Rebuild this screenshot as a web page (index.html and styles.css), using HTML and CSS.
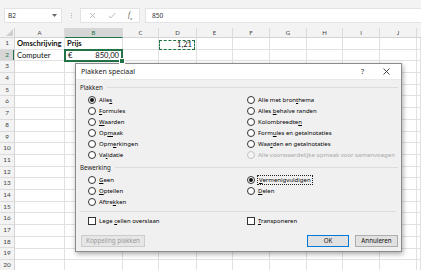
FILE: index.html
```html
<!DOCTYPE html>
<html>
<head>
<meta charset="utf-8">
<link rel="stylesheet" href="styles.css">
</head>
<body>
<div class="app">
  <div class="fbar">
    <div class="namebox"><span class="nb-text">B2</span><svg class="nb-caret" width="5" height="3" viewBox="0 0 5 3"><path d="M0 0h5L2.5 3z" fill="#666"/></svg></div>
    <div class="grip"><i></i><i></i><i></i></div>
    <div class="fxtools">
      <svg width="7" height="7" viewBox="0 0 7 7"><path d="M1 1l5 5M6 1l-5 5" stroke="#b4b4b4" stroke-width="0.9"/></svg>
      <svg width="8" height="7" viewBox="0 0 8 7"><path d="M0.8 3.8l2 2.2 4.4-5" stroke="#b4b4b4" stroke-width="0.9" fill="none"/></svg>
      <span class="fx">f<sub>x</sub></span>
    </div>
    <div class="finput">850</div>
  </div>
  <div class="sheet">
    <div class="heads">
      <div class="corner"><svg width="7" height="7" viewBox="0 0 7 7"><path d="M7 0v7H0z" fill="#cfcfcf"/></svg></div>
      <div class="ch w-a">A</div>
      <div class="ch w-b on">B</div>
      <div class="ch w-c">C</div>
      <div class="ch w-d">D</div>
      <div class="ch w-e">E</div>
      <div class="ch w-f">F</div>
      <div class="ch w-g">G</div>
      <div class="ch w-h">H</div>
      <div class="ch w-i">I</div>
      <div class="ch w-j">J</div>
      <div class="ch w-k"></div>
    </div>
    <div class="body">
      <div class="rowheads">
        <div class="rh">1</div><div class="rh on">2</div><div class="rh">3</div><div class="rh">4</div><div class="rh">5</div>
        <div class="rh">6</div><div class="rh">7</div><div class="rh">8</div><div class="rh">9</div><div class="rh">10</div>
        <div class="rh">11</div><div class="rh">12</div><div class="rh">13</div><div class="rh">14</div><div class="rh">15</div>
        <div class="rh">16</div><div class="rh">17</div><div class="rh">18</div><div class="rh">19</div><div class="rh">20</div>
      </div>
      <div class="col w-a"><div class="cell bold">Omschrijving</div><div class="cell">Computer</div></div>
      <div class="col w-b"><div class="cell bold">Prijs</div><div class="cell sel"><span>€</span><span>850,00</span></div></div>
      <div class="col w-c"></div>
      <div class="col w-d"><div class="cell copy">1,21</div></div>
      <div class="col w-e"></div>
      <div class="col w-f"></div>
      <div class="col w-g"></div>
      <div class="col w-h"></div>
      <div class="col w-i"></div>
      <div class="col w-j"></div>
      <div class="col w-k"></div>
    </div>
  </div>

  <div class="dialog">
    <div class="titlebar">
      <span class="title">Plakken speciaal</span>
      <span class="help">?</span>
      <svg class="close" width="7" height="7" viewBox="0 0 7 7"><path d="M0.5 0.5l6 6M6.5 0.5l-6 6" stroke="#333" stroke-width="0.9"/></svg>
    </div>
    <div class="content">
      <div class="group"><span>Plakken</span><i></i></div>
      <div class="opts">
        <div class="opt"><span class="radio on"></span><span>Alle<u>s</u></span></div>
        <div class="opt"><span class="radio"></span><span>Alle met bron<u>t</u>hema</span></div>
        <div class="opt"><span class="radio"></span><span><u>F</u>ormules</span></div>
        <div class="opt"><span class="radio"></span><span>Alles <u>b</u>ehalve randen</span></div>
        <div class="opt"><span class="radio"></span><span><u>W</u>aarden</span></div>
        <div class="opt"><span class="radio"></span><span>Kolombreedte<u>n</u></span></div>
        <div class="opt"><span class="radio"></span><span>Op<u>m</u>aak</span></div>
        <div class="opt"><span class="radio"></span><span>Form<u>u</u>les en getalnotaties</span></div>
        <div class="opt"><span class="radio"></span><span>Opm<u>e</u>rkingen</span></div>
        <div class="opt"><span class="radio"></span><span>Waa<u>r</u>den en getalnotaties</span></div>
        <div class="opt"><span class="radio"></span><span>Va<u>l</u>idatie</span></div>
        <div class="opt dis"><span class="radio"></span><span>Alle voorwaardelijke opmaak voor samenvoegen</span></div>
      </div>
      <div class="group"><span>Bewerking</span><i></i></div>
      <div class="opts">
        <div class="opt"><span class="radio"></span><span><u>G</u>een</span></div>
        <div class="opt"><span class="radio on"></span><span class="focus"><u>V</u>ermenigvuldigen</span></div>
        <div class="opt"><span class="radio"></span><span><u>O</u>ptellen</span></div>
        <div class="opt"><span class="radio"></span><span><u>D</u>elen</span></div>
        <div class="opt"><span class="radio"></span><span>Aftre<u>k</u>ken</span></div>
        <div class="opt"></div>
      </div>
      <div class="rule"></div>
      <div class="opts checks">
        <div class="opt"><span class="check"></span><span>Lege <u>c</u>ellen overslaan</span></div>
        <div class="opt"><span class="check"></span><span><u>T</u>ransponeren</span></div>
      </div>
      <div class="buttons">
        <div class="btn disabled w-link">Koppeling plakken</div>
        <div class="spacer"></div>
        <div class="btn default w-ok">OK</div>
        <div class="btn w-cancel">Annuleren</div>
      </div>
    </div>
  </div>
</div>
</body>
</html>
```

FILE: styles.css
```css
* { box-sizing: border-box; }
html, body { margin: 0; padding: 0; }
body {
  width: 421px;
  height: 270px;
  overflow: hidden;
  background: #fff;
  font-family: "Noto Sans", "Open Sans", sans-serif;
}
.app { position: relative; width: 421px; height: 270px; overflow: hidden; }

/* formula bar */
.fbar {
  height: 28px;
  background: #f3f3f3;
  display: flex;
  align-items: flex-start;
  padding-top: 8px;
  padding-left: 4px;
}
.namebox {
  width: 58px;
  height: 15px;
  background: #fff;
  border: 1px solid #e3e3e3;
  display: flex;
  align-items: center;
  justify-content: space-between;
  padding: 0 4px 0 3px;
  font-size: 6.6px;
  color: #333;
}
.grip {
  width: 18px;
  height: 15px;
  display: flex;
  flex-direction: column;
  align-items: center;
  justify-content: center;
  gap: 1px;
}
.grip i { display: block; width: 1px; height: 1px; background: #b8b8b8; }
.fxtools {
  width: 60px;
  height: 15px;
  background: #fff;
  border: 1px solid #e3e3e3;
  display: flex;
  align-items: center;
  gap: 12px;
  padding-left: 8px;
}
.fx {
  font-family: "Liberation Serif", serif;
  font-style: italic;
  font-size: 7.5px;
  color: #555;
}
.fx sub { font-size: 5px; }
.finput {
  flex: 1;
  height: 15px;
  margin-left: 5px;
  background: #fff;
  border: 1px solid #e3e3e3;
  border-right: none;
  font-size: 6.6px;
  color: #333;
  padding-left: 6px;
  line-height: 13px;
}

/* sheet */
.sheet { font-family: "Lato", "Liberation Sans", sans-serif; }
.heads { display: flex; height: 10px; background: #f3f3f3; }
.corner {
  width: 15px;
  border-right: 1px solid #d4d4d4;
  border-bottom: 1px solid #d4d4d4;
  display: flex;
  align-items: flex-end;
  justify-content: flex-end;
  padding: 0 1px 1px 0;
}
.ch {
  border-right: 1px solid #dadada;
  border-bottom: 1px solid #d4d4d4;
  font-size: 6px;
  color: #444;
  text-align: center;
  line-height: 9px;
}
.ch.on { background: #d6d6d6; border-bottom: 1px solid #217346; color: #217346; }
.w-a { width: 50px; }
.w-b { width: 58px; }
.w-c { width: 36px; }
.w-d { width: 38px; }
.w-e { width: 36px; }
.w-f { width: 37px; }
.w-g { width: 37px; }
.w-h { width: 36px; }
.w-i { width: 37px; }
.w-j { width: 37px; }
.w-k { flex: 1; border-right: none; }

.body {
  display: flex;
  height: 232px;
  background: repeating-linear-gradient(to bottom, transparent 0, transparent 10.7px, #e1e1e1 10.7px, #e1e1e1 11.7px);
}
.rowheads { width: 15px; background: #f3f3f3; border-right: 1px solid #d4d4d4; }
.rh {
  height: 11.7px;
  border-bottom: 1px solid #dcdcdc;
  font-size: 6.4px;
  color: #444;
  text-align: center;
  line-height: 10.7px;
}
.rh.on { background: #d6d6d6; color: #217346; box-shadow: inset -1px 0 0 #217346; }
.col { border-right: 1px solid #e1e1e1; }
.cell {
  height: 11.7px;
  font-size: 7.6px;
  color: #111;
  line-height: 11px;
  padding: 0 2px;
  white-space: nowrap;
  position: relative;
}
.cell.bold { font-weight: bold; }
.cell.sel { display: flex; justify-content: space-between; padding: 0 3px 0 3px; }
.cell.sel::after {
  content: "";
  position: absolute;
  left: -1px; top: -1px; right: -1px; bottom: -1px;
  border: 2px solid #217346;
}
.cell.sel::before {
  content: "";
  position: absolute;
  right: -3px; bottom: -3px;
  width: 4px; height: 4px;
  background: #217346;
  border: 1px solid #fff;
  z-index: 2;
}
.cell.copy { text-align: right; padding-right: 4px; margin-top: 2px; height: 10px; line-height: 9px; }
.cell.copy::after {
  content: "";
  position: absolute;
  left: 0; top: 0; right: 1px; bottom: 0;
  border: 1px dashed #217346;
}

/* dialog */
.dialog {
  position: absolute;
  left: 75px;
  top: 63px;
  width: 327px;
  height: 189px;
  border: 1px solid #8c8c8c;
  background: #f0f0f0;
  box-shadow: 1px 2px 5px rgba(0, 0, 0, 0.35);
  display: flex;
  flex-direction: column;
  font-size: 6px;
  color: #000;
}
.titlebar {
  height: 16px;
  background: #fff;
  display: flex;
  align-items: center;
  padding: 0 11px 0 5px;
  border-bottom: 1px solid #e8e8e8;
}
.title { flex: 1; font-size: 7px; color: #222; }
.help { font-size: 7px; color: #333; margin-right: 19px; }
.content { flex: 1; padding: 0 3px 0 4px; display: flex; flex-direction: column; }
.group {
  height: 14px;
  display: flex;
  align-items: center;
  gap: 4px;
  color: #222;
  font-size: 6.2px;
}
.group i { flex: 1; height: 1px; background: #dcdcdc; }
.opts {
  display: grid;
  grid-template-columns: 159px 1fr;
  grid-auto-rows: 11.1px;
  padding-left: 8px;
}
.opt { display: flex; align-items: center; white-space: nowrap; color: #000; }
.opt u { text-decoration-thickness: 0.6px; text-underline-offset: 1px; }
.radio {
  width: 8px;
  height: 8px;
  border: 1px solid #333;
  border-radius: 50%;
  background: #fff;
  margin-right: 3px;
  display: flex;
  align-items: center;
  justify-content: center;
  flex: none;
}
.radio.on::after { content: ""; width: 4px; height: 4px; border-radius: 50%; background: #111; }
.opt.dis { color: #a8a8a8; }
.opt.dis .radio { border-color: #c4c4c4; background: #f4f4f4; }
.focus { outline: 1px dotted #222; padding: 0 1px; line-height: 8px; }
.rule { height: 1px; background: #dcdcdc; margin: 3px 2px 0 0; }
.checks { grid-auto-rows: 18px; }
.check {
  width: 8px;
  height: 8px;
  border: 1px solid #333;
  background: #fff;
  margin-right: 3px;
  flex: none;
}
.buttons { display: flex; margin-top: 5px; padding-left: 1px; gap: 6px; font-size: 6.2px; }
.spacer { flex: 1; }
.btn {
  height: 12px;
  border: 1px solid #adadad;
  background: #e1e1e1;
  display: flex;
  align-items: center;
  justify-content: center;
  color: #111;
}
.btn.default { border-color: #0078d7; }
.btn.disabled { border-color: #cccccc; background: #e6e6e6; color: #9a9a9a; }
.w-link { width: 64px; }
.w-ok { width: 42px; }
.w-cancel { width: 43px; }
```
